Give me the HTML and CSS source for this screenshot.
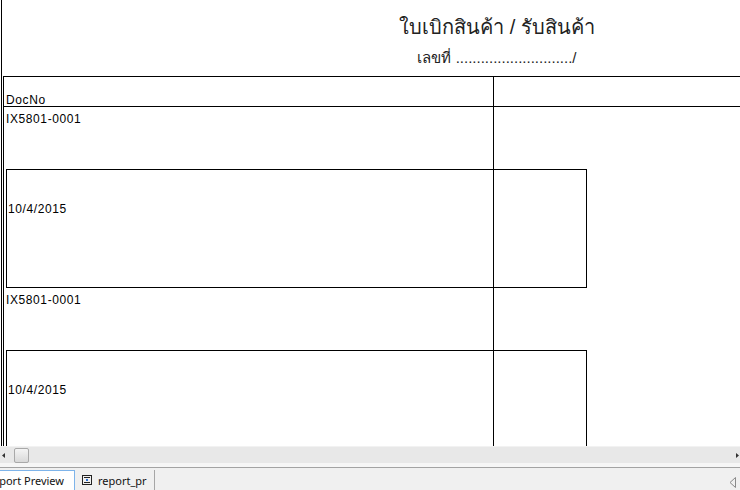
FILE: index.html
```html
<!DOCTYPE html>
<html lang="th">
<head>
    <meta charset="UTF-8">
    <title>Report Preview</title>
    <link rel="stylesheet" href="styles.css">
</head>
<body>
    <div class="viewport">
        <div class="sheet">
            <!-- report header -->
            <div class="report-title">
                <h1>ใบเบิกสินค้า / รับสินค้า</h1>
                <p>เลขที่ ............................/</p>
            </div>

            <div class="grid">
                <div class="grid-head">DocNo</div>

                <div class="record">
                    <div class="doc-no">IX5801-0001</div>
                    <div class="detail">10/4/2015</div>
                </div>

                <div class="record">
                    <div class="doc-no">IX5801-0001</div>
                    <div class="detail">10/4/2015</div>
                </div>
            </div>
        </div>
    </div>

    <div class="hscroll">
        <svg class="arrow" width="13" height="17" viewBox="0 0 13 17"><polygon points="5,6 2,8.5 5,11" fill="#333"/></svg>
        <span class="thumb"></span>
        <svg class="arrow right" width="13" height="17" viewBox="0 0 13 17"><polygon points="9,6 12,8.5 9,11" fill="#333"/></svg>
    </div>

    <div class="tabs">
        <div class="tab active"><span>Report Preview</span></div>
        <div class="tab">
            <svg width="10" height="10" viewBox="0 0 10 10">
                <rect x="0.5" y="0.5" width="9" height="9" fill="none" stroke="#222"/>
                <rect x="2" y="2" width="6" height="1" fill="#222"/>
                <rect x="4" y="4" width="2" height="2" fill="#2a6fd6"/>
                <rect x="2" y="7" width="6" height="1" fill="#222"/>
            </svg>
            report_pr
        </div>
        <svg class="tab-scroll" width="8" height="11" viewBox="0 0 8 11"><polygon points="6.5,0.5 1,5.5 6.5,10.5" fill="none" stroke="#8a8a8a"/></svg>
    </div>
</body>
</html>
```

FILE: styles.css
```css
body {
    margin: 0;
    width: 740px;
    height: 490px;
    overflow: hidden;
    background-color: #f6f6f6;
    font-family: "Liberation Sans", Arial, sans-serif;
}
.viewport {
    height: 446px;
    overflow: hidden;
    padding-left: 1px;
    background-color: white;
    box-sizing: border-box;
}
.sheet {
    width: 990px;
    height: 100%;
    border-left: 1px solid #000;
}
.report-title {
    height: 76px;
    text-align: center;
    color: #222;
}
.report-title h1 {
    margin: 0;
    padding-top: 13px;
    font-size: 20px;
    font-weight: normal;
    line-height: 28px;
}
.report-title p {
    margin: 6px 0 0;
    font-size: 15px;
    line-height: 22px;
}
.grid {
    margin-left: 1px;
    border-left: 1px solid #000;
    border-top: 1px solid #000;
    background: linear-gradient(#000, #000) no-repeat 489px 0 / 1px 100%;
    font-size: 12px;
    letter-spacing: 0.6px;
    line-height: 14px;
    color: #000;
}
.grid-head {
    height: 30px;
    padding: 16px 0 0 2px;
    border-bottom: 1px solid #000;
    box-sizing: border-box;
}
.doc-no {
    height: 62px;
    padding: 5px 0 0 2px;
    box-sizing: border-box;
}
.detail {
    margin-left: 2px;
    width: 581px;
    height: 119px;
    padding: 32px 0 0 1px;
    border: 1px solid #000;
    box-sizing: border-box;
}

/* bottom scrollbar */
.hscroll {
    display: flex;
    align-items: center;
    height: 17px;
    margin-bottom: 4px;
    background-color: #e8e8e8;
    border-top: 1px solid #f2f2f2;
    box-sizing: border-box;
}
.hscroll .arrow {
    flex: none;
}
.hscroll .right {
    margin-left: auto;
}
.thumb {
    width: 15px;
    height: 15px;
    margin-left: 1px;
    border: 1px solid #a9a9a9;
    border-radius: 2px;
    background: linear-gradient(#f4f4f4, #d9d9d9);
    box-sizing: border-box;
}

/* tab strip */
.tabs {
    display: flex;
    align-items: flex-end;
    height: 23px;
    border-top: 1px solid #a3a3a3;
    background-color: #f0f0f0;
    box-sizing: border-box;
    font-family: "Noto Sans", "Open Sans", sans-serif;
    font-size: 11px;
    color: #111;
}
.tab {
    display: flex;
    align-items: center;
    gap: 6px;
    height: 20px;
    padding: 0 7px 0 7px;
    border-right: 1px solid #a6a6a6;
    white-space: nowrap;
}
.tab.active {
    justify-content: flex-end;
    width: 75px;
    padding: 0 10px 0 0;
    overflow: hidden;
    border-top: 1px solid #7eb4ea;
    border-right: 1px solid #7eb4ea;
    background-color: white;
    box-sizing: border-box;
}
.tab-scroll {
    margin: 0 3px 2px auto;
}
```
